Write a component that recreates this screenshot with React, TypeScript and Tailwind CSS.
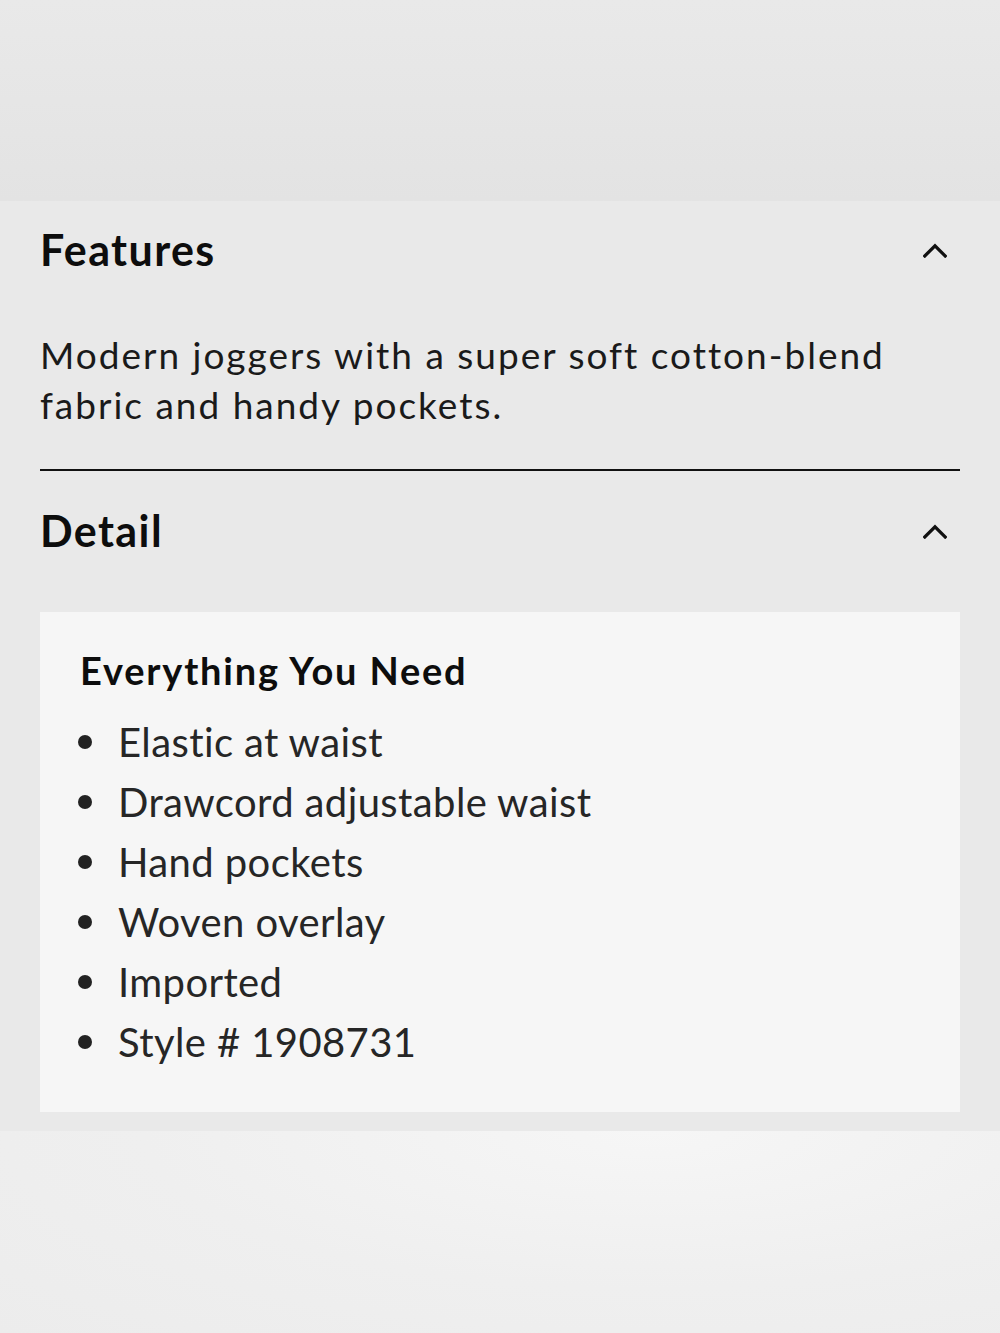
import React from "react";

const font = { fontFamily: "Lato, 'Noto Sans', sans-serif" };

function Chevron() {
  return (
    <svg width="24" height="15" viewBox="0 0 24 15" fill="none">
      <path d="M1.8 13 L12 2.8 L22.2 13" stroke="#111" strokeWidth="3.2" strokeLinecap="square" />
    </svg>
  );
}

const details = [
  "Elastic at waist",
  "Drawcord adjustable waist",
  "Hand pockets",
  "Woven overlay",
  "Imported",
  "Style # 1908731",
];

export default function App() {
  return (
    <div className="w-[1000px] h-[1333px] flex flex-col bg-[#e8e8e8]" style={font}>
      <div className="h-[201px] bg-[linear-gradient(180deg,#e9e9e9,#e3e3e3)]" />
      <div className="bg-[#e9e9e9] px-10 pb-[19px]">
        <div className="flex items-center justify-between h-[98px]">
          <h2 className="text-[43px] leading-[50px] font-bold text-[#0d0d0d] tracking-[1.4px]">Features</h2>
          <div className="pr-[13px] flex"><Chevron /></div>
        </div>
        <p className="mt-[31px] mb-[39px] text-[37px] leading-[50px] text-[#1a1a1a] tracking-[2px]">
          Modern joggers with a super soft cotton-blend fabric and handy pockets.
        </p>
        <div className="h-[2px] bg-[#111]" />
        <div className="flex items-center justify-between h-[120px]">
          <h2 className="text-[43px] leading-[50px] font-bold text-[#0d0d0d] tracking-[1.4px]">Detail</h2>
          <div className="pr-[13px] flex"><Chevron /></div>
        </div>
        <div className="mt-[21px] bg-[#f6f6f6] px-10 pt-[33px] pb-[40px]">
          <h3 className="text-[38px] leading-[50px] font-bold text-[#0d0d0d] tracking-[1.8px] mb-[17px]">
            Everything You Need
          </h3>
          <ul className="flex flex-col">
            {details.map((d) => (
              <li key={d} className="flex items-center h-[60px] text-[40px] text-[#262626] tracking-[0.4px]">
                <span className="w-[40px] flex -ml-[2px] pr-[1px]">
                  <span className="w-[14px] h-[14px] rounded-full bg-[#222]" />
                </span>
                <span>{d}</span>
              </li>
            ))}
          </ul>
        </div>
      </div>
      <div className="flex-1 bg-[radial-gradient(ellipse_at_65%_0%,#f6f6f6_0%,#efefef_55%,#ececec_100%)]" />
    </div>
  );
}
